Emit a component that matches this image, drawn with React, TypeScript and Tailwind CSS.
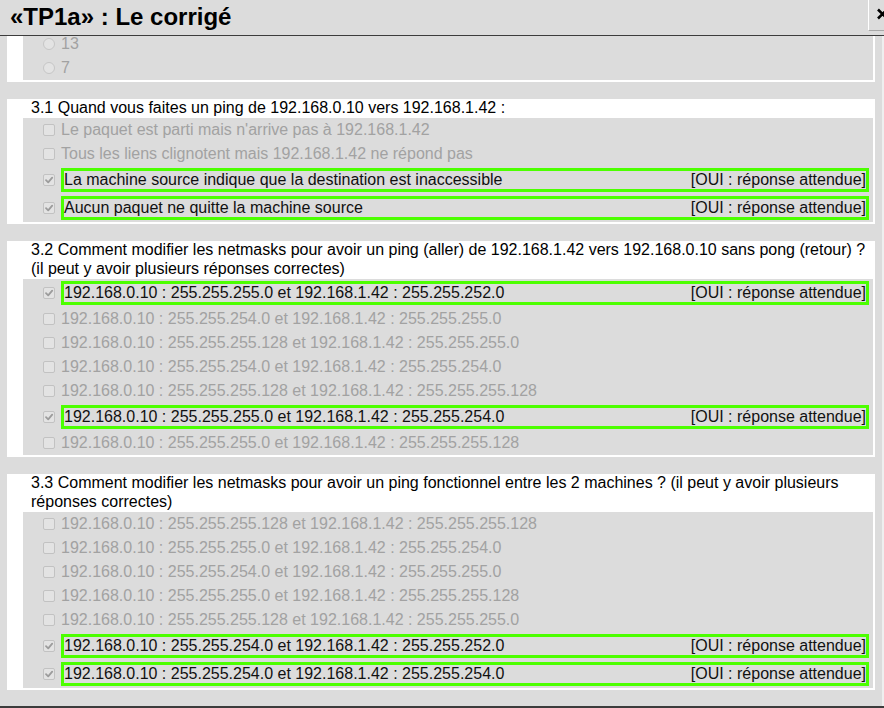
import React from "react";

type Item = { text: string; ok?: boolean };

const q31: Item[] = [
  { text: "Le paquet est parti mais n'arrive pas à 192.168.1.42" },
  { text: "Tous les liens clignotent mais 192.168.1.42 ne répond pas" },
  { text: "La machine source indique que la destination est inaccessible", ok: true },
  { text: "Aucun paquet ne quitte la machine source", ok: true },
];

const q32: Item[] = [
  { text: "192.168.0.10 : 255.255.255.0 et 192.168.1.42 : 255.255.252.0", ok: true },
  { text: "192.168.0.10 : 255.255.254.0 et 192.168.1.42 : 255.255.255.0" },
  { text: "192.168.0.10 : 255.255.255.128 et 192.168.1.42 : 255.255.255.0" },
  { text: "192.168.0.10 : 255.255.254.0 et 192.168.1.42 : 255.255.254.0" },
  { text: "192.168.0.10 : 255.255.255.128 et 192.168.1.42 : 255.255.255.128" },
  { text: "192.168.0.10 : 255.255.255.0 et 192.168.1.42 : 255.255.254.0", ok: true },
  { text: "192.168.0.10 : 255.255.255.0 et 192.168.1.42 : 255.255.255.128" },
];

const q33: Item[] = [
  { text: "192.168.0.10 : 255.255.255.128 et 192.168.1.42 : 255.255.255.128" },
  { text: "192.168.0.10 : 255.255.255.0 et 192.168.1.42 : 255.255.254.0" },
  { text: "192.168.0.10 : 255.255.254.0 et 192.168.1.42 : 255.255.255.0" },
  { text: "192.168.0.10 : 255.255.255.0 et 192.168.1.42 : 255.255.255.128" },
  { text: "192.168.0.10 : 255.255.255.128 et 192.168.1.42 : 255.255.255.0" },
  { text: "192.168.0.10 : 255.255.254.0 et 192.168.1.42 : 255.255.252.0", ok: true },
  { text: "192.168.0.10 : 255.255.254.0 et 192.168.1.42 : 255.255.254.0", ok: true },
];

const CheckBox = ({ checked }: { checked?: boolean }) => (
  <span className="w-[12px] h-[12px] shrink-0 rounded-[2px] border border-[#c2c2c2] bg-[#e3e3e3] flex items-center justify-center">
    {checked && (
      <svg width="10" height="10" viewBox="0 0 10 10">
        <path d="M2 5.2 L4.2 7.4 L8.2 2.6" fill="none" stroke="#9c9c9c" strokeWidth="1.8" strokeLinecap="round" strokeLinejoin="round" />
      </svg>
    )}
  </span>
);

const Radio = () => (
  <span className="w-[12px] h-[12px] shrink-0 rounded-full border border-[#c6c6c6] bg-[#e3e3e3]" />
);

const Row = ({ item }: { item: Item }) => {
  if (item.ok) {
    return (
      <li className="flex items-center my-[2px] pl-[20px] pr-[4px]">
        <CheckBox checked />
        <div className="ml-[6px] flex-1 flex justify-between border-[3px] border-[#4cff00] leading-[18px] text-[#111]">
          <span>{item.text}</span>
          <span>[OUI : réponse attendue]</span>
        </div>
      </li>
    );
  }
  return (
    <li className="flex items-center py-[3px] pl-[20px] leading-[18px] text-[#a2a2a2]">
      <CheckBox />
      <span className="ml-[6px]">{item.text}</span>
    </li>
  );
};

const Card = ({ title, items }: { title: React.ReactNode; items: Item[] }) => (
  <section className="bg-white pl-[16px] pr-[2px] pb-[2px]">
    <p className="pl-[8px] pb-[1px] leading-[18.4px] text-black">{title}</p>
    <ul className="bg-[#dcdcdc] flex flex-col">
      {items.map((it, i) => (
        <Row key={i} item={it} />
      ))}
    </ul>
  </section>
);

export default function App() {
  return (
    <div className="w-[884px] h-[708px] flex flex-col bg-[#dcdcdc] text-[16px] overflow-hidden" style={{ fontFamily: '"Liberation Sans", Arial, sans-serif' }}>
      <header className="h-[36px] shrink-0 flex justify-between items-start border-b border-[#3c3c3c]">
        <h1 className="pl-[10px] h-[34px] flex items-center text-[24px] font-bold text-black">«TP1a» : Le corrigé</h1>
        <button className="w-[16px] h-[31px] border-l border-b border-l-white border-b-[#a8a8a8] overflow-hidden">
          <svg width="16" height="31" viewBox="0 0 16 31">
            <path d="M9 9.5 L18 18.5 M18 9.5 L9 18.5" stroke="#000" strokeWidth="2.6" />
          </svg>
        </button>
      </header>

      <main className="flex-1 overflow-hidden border-r-2 border-[#efefef]">
        <div className="-mt-[4px] pl-[7px] pr-[7px] flex flex-col gap-[17px]">
          <section className="bg-white pl-[16px] pr-[2px] pb-[2px]">
            <ul className="bg-[#dcdcdc] text-[#a2a2a2] flex flex-col">
              {["13", "7"].map((v) => (
                <li key={v} className="flex items-center py-[3px] pl-[20px] leading-[18px]">
                  <Radio />
                  <span className="ml-[6px]">{v}</span>
                </li>
              ))}
            </ul>
          </section>

          <Card title="3.1 Quand vous faites un ping de 192.168.0.10 vers 192.168.1.42 :" items={q31} />

          <Card
            title={
              <>
                3.2 Comment modifier les netmasks pour avoir un ping (aller) de 192.168.1.42 vers 192.168.0.10 sans pong (retour) ?
                <br />
                (il peut y avoir plusieurs réponses correctes)
              </>
            }
            items={q32}
          />

          <Card
            title={
              <>
                3.3 Comment modifier les netmasks pour avoir un ping fonctionnel entre les 2 machines ? (il peut y avoir plusieurs
                <br />
                réponses correctes)
              </>
            }
            items={q33}
          />
        </div>
      </main>

      <footer className="h-[2px] shrink-0 bg-[#3c3c3c]" />
    </div>
  );
}
